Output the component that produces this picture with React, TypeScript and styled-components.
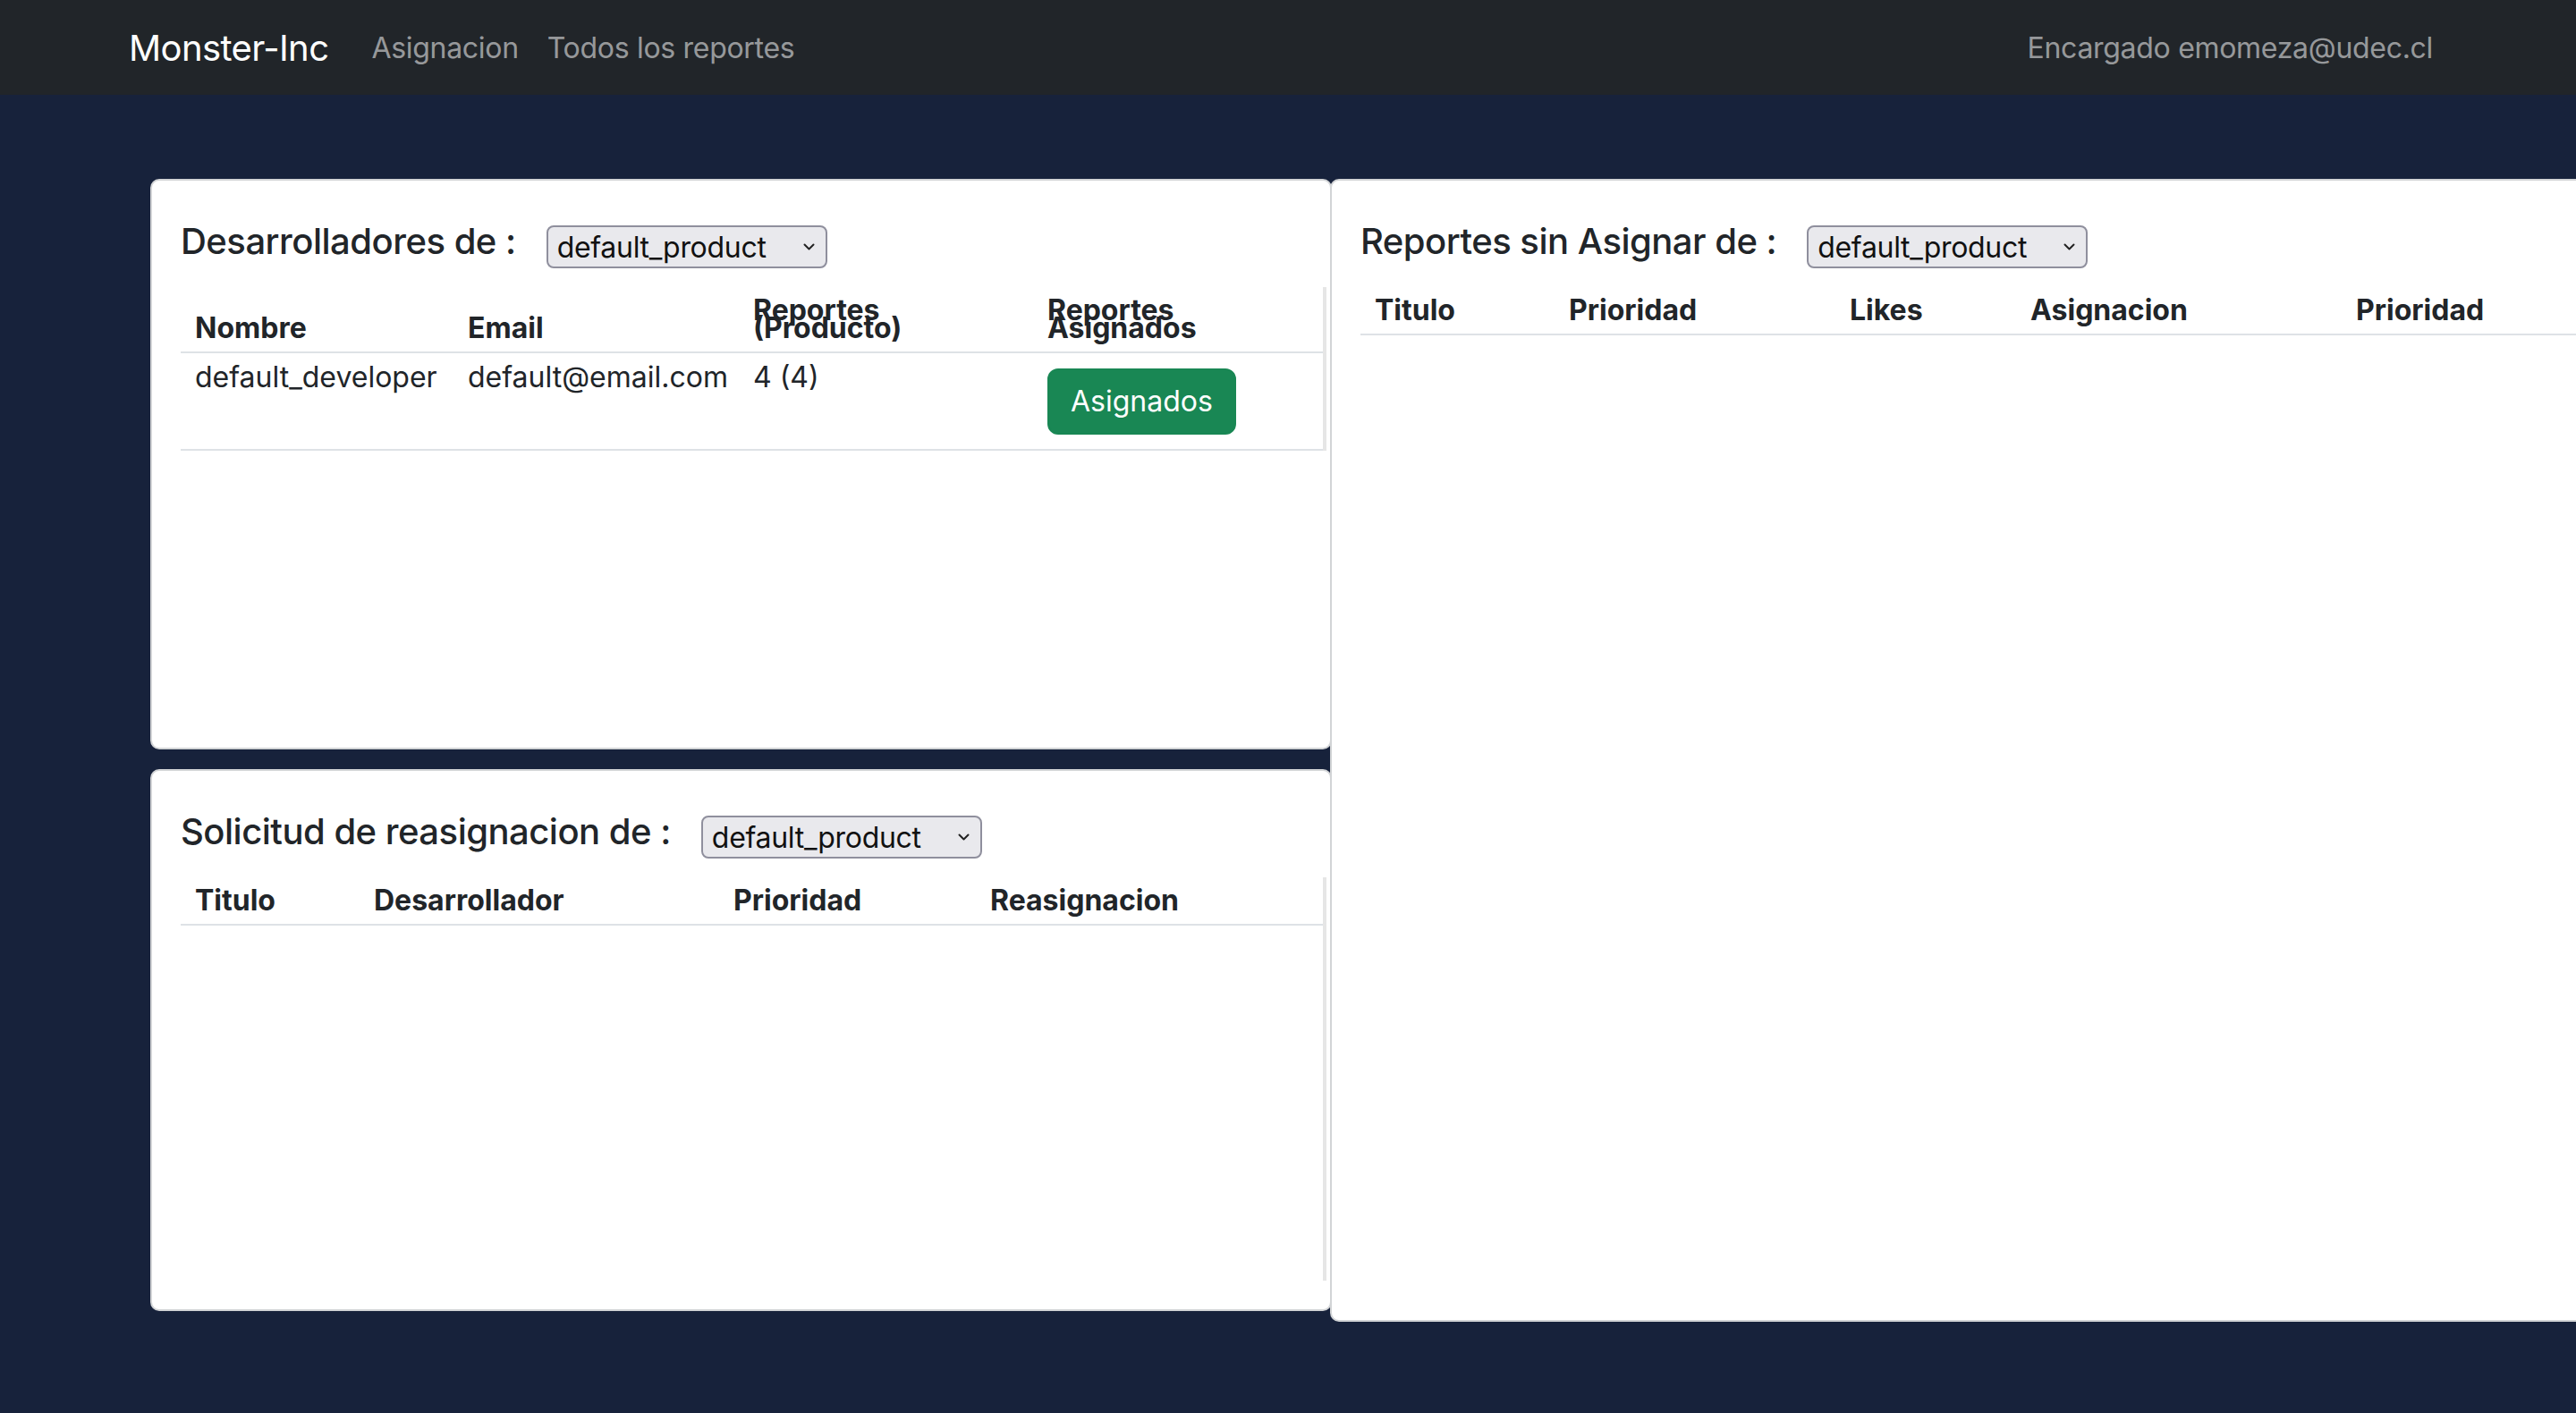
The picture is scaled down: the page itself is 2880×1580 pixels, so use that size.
import React from 'react'
import styled, { createGlobalStyle } from 'styled-components'

const GlobalStyle = createGlobalStyle`
    html, body {
        margin: 0;
        padding: 0;
        background: #17223b;
        font-family: Inter, "Noto Sans", "Liberation Sans", sans-serif;
        color: #212529;
        overflow: hidden;
    }
    * { box-sizing: border-box; }
`

const NavbarStyled = styled.nav`
    height: 106px;
    background: #212529;
    padding: 0 144px;
    display: flex;
    align-items: center;
`

const BrandStyled = styled.span`
    font-size: 40px;
    letter-spacing: -0.6px;
    color: #fff;
    margin-right: 32px;
`

const NavLinkStyled = styled.span`
    font-size: 32px;
    letter-spacing: -0.3px;
    color: rgba(255, 255, 255, 0.55);
    padding: 0 16px;
`

const NavRightStyled = styled.div`
    margin-left: auto;
`

const MainStyled = styled.main`
    display: flex;
    align-items: flex-start;
    padding: 94px 0 0 168px;
`

const LeftColumnStyled = styled.div`
    width: 1321px;
    flex-shrink: 0;
    display: flex;
    flex-direction: column;
    gap: 22px;
`

const CardStyled = styled.section<{ $height?: number, $width?: number, $side: 'left' | 'right' }>`
    background: #fff;
    border: 2px solid #d2d4d6;
    border-radius: 10px;
    flex-shrink: 0;
    width: ${p => p.$width ? `${p.$width}px` : 'auto'};
    height: ${p => p.$height ? `${p.$height}px` : 'auto'};
    padding: ${p => p.$side === 'left' ? '32px 2px 32px 32px' : '32px'};
    margin-left: ${p => p.$side === 'right' ? '-2px' : '0'};
    overflow: hidden;
`

const CardHeadStyled = styled.div`
    display: flex;
    align-items: flex-start;
    gap: 34px;
    padding-top: 12px;
    margin-bottom: 21px;
`

const CardTitleStyled = styled.h5`
    margin: 0;
    font-size: 40px;
    font-weight: 500;
    letter-spacing: -0.5px;
    line-height: 48px;
    white-space: nowrap;
`

const SelectWrapStyled = styled.div`
    position: relative;
    margin-top: 6px;
    width: 314px;
    height: 48px;
`

const SelectStyled = styled.select`
    appearance: none;
    width: 100%;
    height: 100%;
    font-family: inherit;
    font-size: 32px;
    letter-spacing: -0.3px;
    color: #111;
    background: #e9e9ed;
    border: 2px solid #8f8f9d;
    border-radius: 8px;
    padding: 0 40px 0 10px;
`

const ChevronStyled = styled.svg`
    position: absolute;
    right: 14px;
    top: 20px;
    pointer-events: none;
`

const TableWrapStyled = styled.div<{ $height?: number }>`
    border-right: 4px solid #e6e6e6;
    margin-right: 2px;
    height: ${p => p.$height ? `${p.$height}px` : 'auto'};
`

const TableStyled = styled.table`
    border-collapse: collapse;
    line-height: 20px;
    font-size: 32px;
    table-layout: fixed;
    width: 100%;
`

const ThStyled = styled.th<{ $width?: number }>`
    width: ${p => p.$width ? `${p.$width}px` : 'auto'};
    text-align: left;
    vertical-align: bottom;
    font-weight: 700;
    padding: 16px;
    border-bottom: 2px solid #dee2e6;
    white-space: nowrap;
`

const TdStyled = styled.td`
    vertical-align: top;
    padding: 17px 16px 16px;
    border-bottom: 2px solid #dee2e6;
    white-space: nowrap;
`

const ButtonStyled = styled.button`
    font-family: inherit;
    font-size: 32px;
    line-height: 48px;
    color: #fff;
    background: #198754;
    border: 2px solid #198754;
    border-radius: 12px;
    padding: 11px 24px;
`

const ProductSelect = () => (
    <SelectWrapStyled>
        <SelectStyled defaultValue='default_product'>
            <option value='default_product'>default_product</option>
        </SelectStyled>
        <ChevronStyled width='13' height='8' viewBox='0 0 13 8'>
            <path d='M1.5 1.5 L6.5 6.5 L11.5 1.5' fill='none' stroke='#222' strokeWidth='2' strokeLinecap='round' strokeLinejoin='round' />
        </ChevronStyled>
    </SelectWrapStyled>
)

interface Column {
    label: React.ReactNode,
    width?: number
}

const TableHead = ({ columns }: { columns: Column[] }) => <thead>
    <tr>
        {columns.map((col, idx) => <ThStyled key={idx} $width={col.width}>{col.label}</ThStyled>)}
    </tr>
</thead>

const developerColumns: Column[] = [
    { label: 'Nombre', width: 305 },
    { label: 'Email', width: 319 },
    { label: <>Reportes<br />(Producto)</>, width: 329 },
    { label: <>Reportes<br />Asignados</> },
]

const reassignColumns: Column[] = [
    { label: 'Titulo', width: 200 },
    { label: 'Desarrollador', width: 402 },
    { label: 'Prioridad', width: 287 },
    { label: 'Reasignacion' },
]

const unassignedColumns: Column[] = [
    { label: 'Titulo', width: 217 },
    { label: 'Prioridad', width: 314 },
    { label: 'Likes', width: 202 },
    { label: 'Asignacion', width: 364 },
    { label: 'Prioridad' },
]

export default function App() {
    return (
        <>
            <GlobalStyle />
            <NavbarStyled>
                <BrandStyled>Monster-Inc</BrandStyled>
                <NavLinkStyled>Asignacion</NavLinkStyled>
                <NavLinkStyled>Todos los reportes</NavLinkStyled>
                <NavRightStyled>
                    <NavLinkStyled>Encargado emomeza@udec.cl</NavLinkStyled>
                </NavRightStyled>
            </NavbarStyled>
            <MainStyled>
                <LeftColumnStyled>
                    <CardStyled $side='left' $height={638}>
                        <CardHeadStyled>
                            <CardTitleStyled>Desarrolladores de :</CardTitleStyled>
                            <ProductSelect />
                        </CardHeadStyled>
                        <TableWrapStyled>
                            <TableStyled>
                                <TableHead columns={developerColumns} />
                                <tbody>
                                    <tr>
                                        <TdStyled>default_developer</TdStyled>
                                        <TdStyled>default@email.com</TdStyled>
                                        <TdStyled>4 (4)</TdStyled>
                                        <TdStyled><ButtonStyled>Asignados</ButtonStyled></TdStyled>
                                    </tr>
                                </tbody>
                            </TableStyled>
                        </TableWrapStyled>
                    </CardStyled>
                    <CardStyled $side='left'>
                        <CardHeadStyled>
                            <CardTitleStyled>Solicitud de reasignacion de :</CardTitleStyled>
                            <ProductSelect />
                        </CardHeadStyled>
                        <TableWrapStyled $height={451}>
                            <TableStyled>
                                <TableHead columns={reassignColumns} />
                            </TableStyled>
                        </TableWrapStyled>
                    </CardStyled>
                </LeftColumnStyled>
                <CardStyled $side='right' $width={1500} $height={1278}>
                    <CardHeadStyled>
                        <CardTitleStyled>Reportes sin Asignar de :</CardTitleStyled>
                        <ProductSelect />
                    </CardHeadStyled>
                    <TableStyled>
                        <TableHead columns={unassignedColumns} />
                    </TableStyled>
                </CardStyled>
            </MainStyled>
        </>
    )
}
